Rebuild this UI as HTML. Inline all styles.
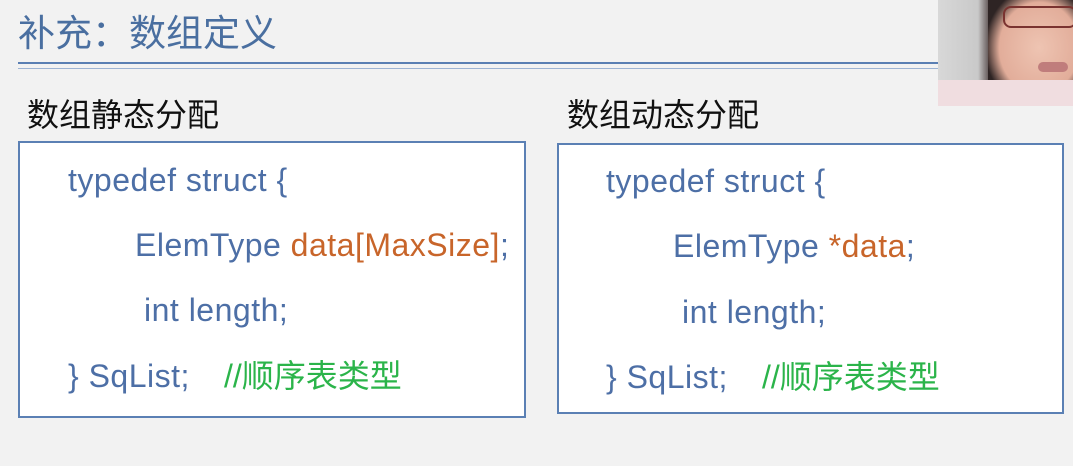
<!DOCTYPE html>
<html><head><meta charset="utf-8"><style>
body{margin:0;width:1073px;height:466px;background:#f2f2f2;position:relative;overflow:hidden;font-family:"Liberation Sans","Noto Sans CJK SC",sans-serif}
.a{position:absolute;white-space:nowrap;line-height:1}
.t{font-size:37px;color:#4a6fa0;left:18px;top:15px}
.h{font-size:32px;color:#111}
.box{position:absolute;background:#fff;border:2px solid #5b80b4}
.c{font-size:32px;color:#4d6fa6;letter-spacing:0.5px}
.o{color:#c8652a}.g{color:#2bb44a;letter-spacing:0}
.cam{position:absolute;left:938px;top:0;width:135px;height:106px;background:linear-gradient(90deg,#d8d8d8 0,#c9c9c9 40px,#3a2a2a 55px,#e7b8a8 75px,#eabcaa 135px)}
</style></head><body>
<div class="a t">补充：数组定义</div>
<div style="position:absolute;left:18px;top:62px;width:920px;height:2px;background:#5a7fb3"></div>
<div style="position:absolute;left:18px;top:68px;width:920px;height:1px;background:#9db3d3"></div>
<div class="cam">
<div style="position:absolute;left:50px;top:0;width:85px;height:106px;background:radial-gradient(ellipse at 60% 45%,#eec4b2 0,#e2ad9a 55%,#2e2424 75%)"></div>
<div style="position:absolute;left:0;top:80px;width:135px;height:26px;background:#f0dde0"></div>
<div style="position:absolute;left:65px;top:6px;width:70px;height:18px;border:2px solid #7a3330;border-radius:8px"></div>
<div style="position:absolute;left:100px;top:62px;width:30px;height:10px;background:#c07d7c;border-radius:6px"></div>
</div>
<div class="a h" style="left:27px;top:99px">数组静态分配</div>
<div class="a h" style="left:567px;top:99px">数组动态分配</div>
<div class="box" style="left:18px;top:141px;width:504px;height:273px"></div>
<div class="box" style="left:557px;top:143px;width:503px;height:267px"></div>
<div class="a c" style="left:68px;top:164px">typedef struct {</div>
<div class="a c" style="left:135px;top:229px">ElemType <span class="o">data[MaxSize]</span>;</div>
<div class="a c" style="left:144px;top:294px">int length;</div>
<div class="a c" style="left:68px;top:360px">} SqList;</div>
<div class="a c g" style="left:224px;top:360px">//顺序表类型</div>
<div class="a c" style="left:606px;top:165px">typedef struct {</div>
<div class="a c" style="left:673px;top:230px">ElemType <span class="o">*data</span>;</div>
<div class="a c" style="left:682px;top:296px">int length;</div>
<div class="a c" style="left:606px;top:361px">} SqList;</div>
<div class="a c g" style="left:762px;top:361px">//顺序表类型</div>
</body></html>
